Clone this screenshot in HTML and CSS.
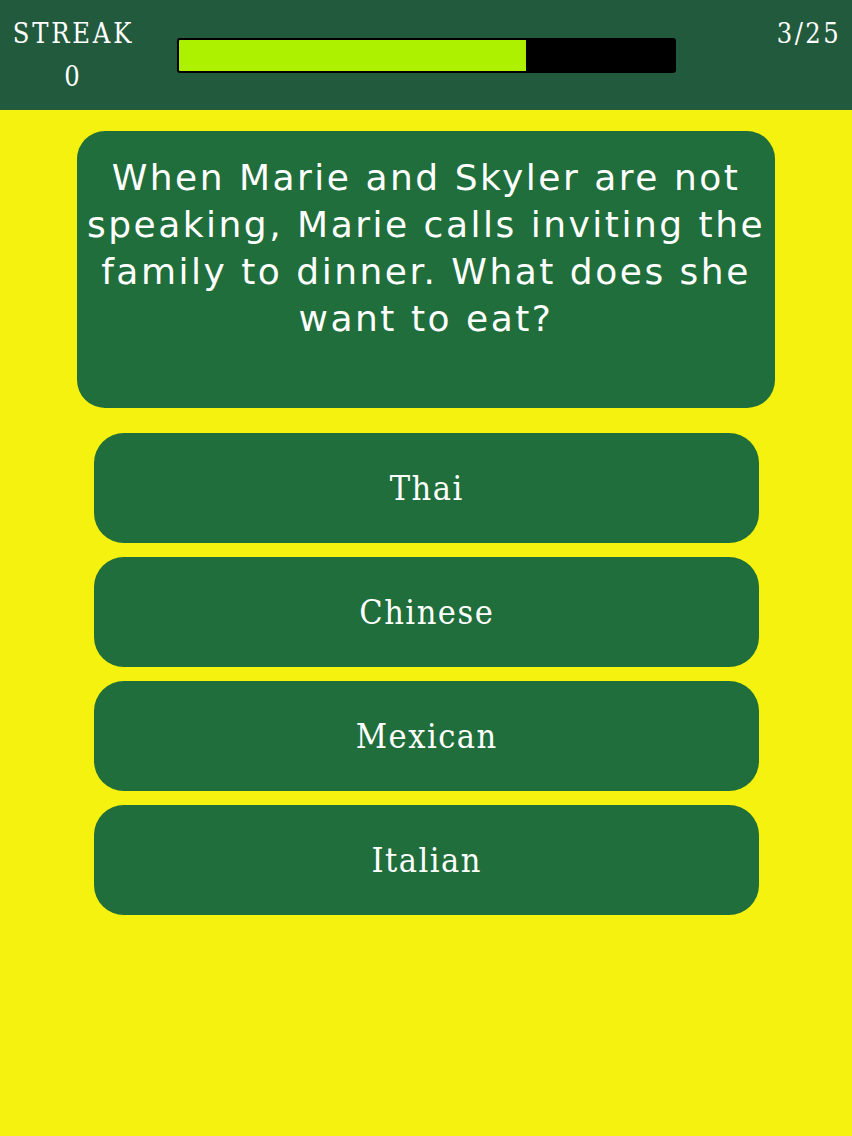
FILE: index.html
```html
<!DOCTYPE html>
<html>
<head>
<meta charset="utf-8">
<link rel="stylesheet" href="styles.css">
</head>
<body>
<header class="top">
  <div class="streak">
    <div class="streak-label">STREAK</div>
    <div class="streak-value">0</div>
  </div>
  <div class="progress"><div class="progress-fill" style="width:70%"></div></div>
  <div class="count">3/25</div>
</header>
<main class="quiz">
  <section class="question">When Marie and Skyler are not speaking, Marie calls inviting the family to dinner. What does she want to eat?</section>
  <div class="answers">
    <button class="answer">Thai</button>
    <button class="answer">Chinese</button>
    <button class="answer">Mexican</button>
    <button class="answer">Italian</button>
  </div>
</main>
</body>
</html>
```
FILE: styles.css
```css
html, body {
  margin: 0;
  padding: 0;
  height: 100%;
}
body {
  background: #f5f20f;
  font-family: "DejaVu Serif", serif;
}
.top {
  height: 110px;
  background: #215a3d;
  display: flex;
  align-items: flex-start;
  color: #fff;
  box-sizing: border-box;
  padding: 0 11px 0 10px;
}
.streak {
  width: 124px;
  text-align: center;
  font-family: "DejaVu Serif", serif;
  font-stretch: condensed;
  font-size: 27px;
  letter-spacing: 2.8px;
  text-indent: 2.8px;
  line-height: 43px;
  padding-top: 12px;
}
.progress {
  margin-top: 38px;
  margin-left: 43px;
  width: 499px;
  height: 35px;
  box-sizing: border-box;
  background: #000;
  border: 2px solid #000;
  border-radius: 3px;
  overflow: hidden;
}
.progress-fill {
  height: 100%;
  background: #adf000;
}
.count {
  margin-left: auto;
  font-family: "DejaVu Serif", serif;
  font-stretch: condensed;
  font-size: 27px;
  letter-spacing: 2.4px;
  line-height: 43px;
  padding-top: 12px;
}
.quiz {
  display: flex;
  flex-direction: column;
  align-items: center;
  padding-top: 21px;
}
.question {
  width: 698px;
  height: 277px;
  box-sizing: border-box;
  background: #1f6e3b;
  border-radius: 28px;
  color: #fff;
  font-family: "DejaVu Sans", sans-serif;
  font-size: 36px;
  letter-spacing: 2.5px;
  line-height: 47px;
  text-align: center;
  padding: 23px 8px 0;
}
.answers {
  margin-top: 25px;
  display: flex;
  flex-direction: column;
  gap: 14px;
}
.answer {
  width: 665px;
  height: 110px;
  border: none;
  border-radius: 30px;
  background: #1f6e3b;
  color: #fff;
  font-family: "DejaVu Serif", serif;
  font-stretch: condensed;
  font-size: 34px;
  letter-spacing: 1.5px;
  text-indent: 1.5px;
  padding: 0;
}
```
